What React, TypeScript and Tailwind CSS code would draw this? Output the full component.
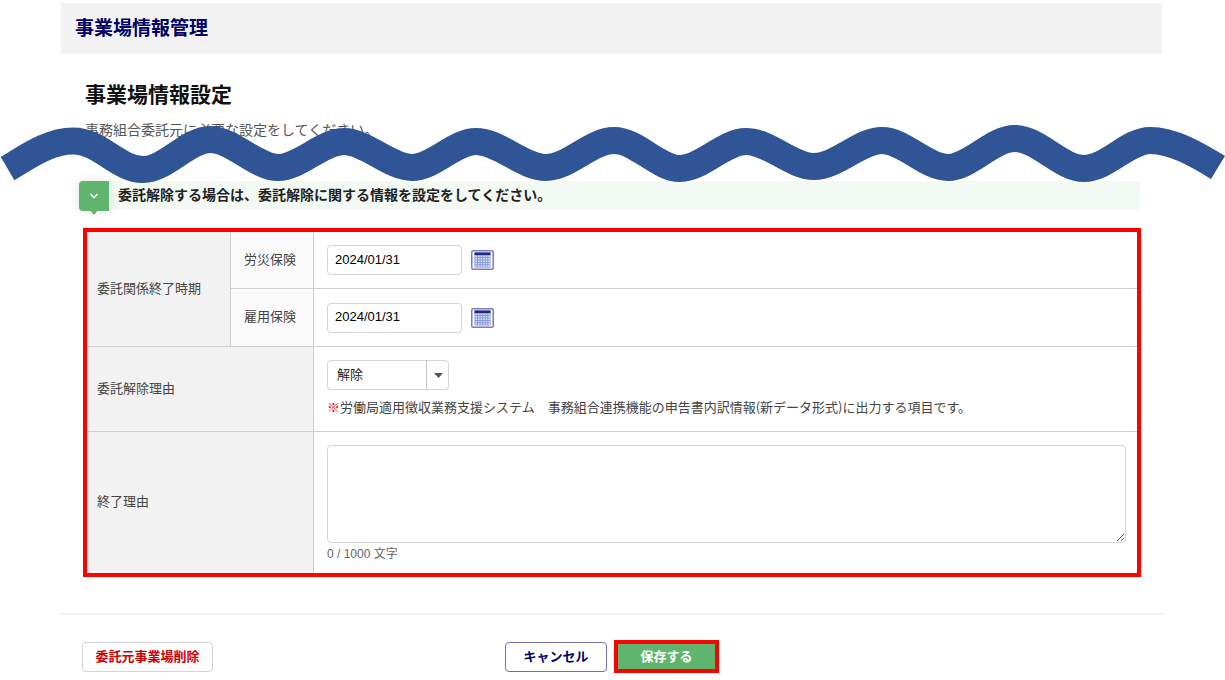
import { useState } from 'react'
import type { ReactNode } from 'react'

const gridX = [4.3, 6.9, 9.5, 12.1, 14.7, 17.3]
const gridY = [5.6, 8, 10.4, 12.8, 15.2]

function CalendarIcon() {
  return (
    <svg width="23" height="20" viewBox="0 0 23 20" aria-hidden="true">
      <rect x="0.75" y="0.75" width="21.5" height="18.5" rx="1.5" fill="#fff" stroke="#7a7dbb" strokeWidth="1.5" />
      <rect x="3.5" y="2.5" width="16" height="15" fill="#7f8ed6" />
      <rect x="3.5" y="2.5" width="16" height="2.5" fill="#22277f" />
      {gridY.map((y) =>
        gridX.map((x) => <rect key={`${x}-${y}`} x={x} y={y} width="1.7" height="1.6" fill="#d8e2fb" />),
      )}
    </svg>
  )
}

function Wave() {
  return (
    <svg
      className="absolute left-0 top-[120px] w-full h-[70px] pointer-events-none"
      viewBox="0 120 1225 70"
      preserveAspectRatio="none"
      aria-hidden="true"
    >
      <path
        d="M7.5 168.5 C27 157 49 141 73 141 C100 141 118 169.5 143 169.5 C166 169.5 188 139.5 210 139.5 C233 139.5 256 167.5 278 167.5 C300 167.5 322 141.5 344 141.5 C366 141.5 390 167.5 412 167.5 C434 167.5 454 141.5 476 141.5 C499 141.5 523 167.5 546 167.5 C569 167.5 591 140.5 614 140.5 C637 140.5 658 168.5 680 168.5 C702 168.5 724 141.5 746 141.5 C769 141.5 792 166.5 814 166.5 C837 166.5 860 140.5 882 140.5 C904 140.5 926 167.5 948 167.5 C970 167.5 992 138.5 1015 138.5 C1038 138.5 1061 168.5 1084 168.5 C1107 168.5 1128 140.5 1150 140.5 C1174 140.5 1199 156 1218 167.5"
        fill="none"
        stroke="#2f5597"
        strokeWidth="27"
      />
    </svg>
  )
}

function HeadCell({ children, sub, rowSpan, colSpan, last }: {
  children: ReactNode
  sub?: boolean
  rowSpan?: number
  colSpan?: number
  last?: boolean
}) {
  return (
    <th
      scope="row"
      rowSpan={rowSpan}
      colSpan={colSpan}
      className={`border-r border-[#cfcfcf] pb-[3px] text-left font-normal ${last ? '' : 'border-b'} ${
        sub ? 'bg-[#fafafa] px-[13px]' : 'bg-[#f2f2f2] px-[10px]'
      }`}
    >
      {children}
    </th>
  )
}

function DateField({ id, label }: { id: string; label: string }) {
  const [value, setValue] = useState('2024/01/31')
  return (
    <div className="flex items-center gap-[9px]">
      <input
        id={id}
        type="text"
        value={value}
        onChange={(e) => setValue(e.target.value)}
        className="w-[135px] h-[30px] rounded border border-[#d5d5d5] bg-white px-[7px] pb-[2px] font-['Liberation_Sans',sans-serif] text-[13px] text-black"
      />
      <button type="button" aria-label={`${label} カレンダー`}>
        <CalendarIcon />
      </button>
    </div>
  )
}

export default function App() {
  const [reason, setReason] = useState('')

  return (
    <main className="relative bg-white pt-[3px] pb-2 text-[13px] text-[#444] font-['Noto_Sans_CJK_JP',sans-serif]">
      <header className="ml-[61px] mr-[63px] flex h-[51px] items-center bg-[#f2f2f2] px-[14px] pb-1">
        <h1 className="text-[19px] leading-6 font-bold text-[#000066]">事業場情報管理</h1>
      </header>

      <section className="ml-[79px] mr-[84px] pt-6">
        <h2 className="pl-[6px] text-[21px] leading-[30px] font-bold text-[#111]">事業場情報設定</h2>
        <p className="mt-[11px] pl-[6px] text-sm leading-5 text-[#555]">
          事務組合委託元に必要な設定をしてください。
        </p>

        <div className="mt-[42px] mr-[1px] flex h-[29px] items-start rounded bg-[#f3faf4]">
          <button
            type="button"
            aria-label="開閉"
            className="relative flex h-[30px] w-[30px] items-center justify-center rounded-l bg-[#5fb56d] shadow-[0_0_10px_rgba(0,0,0,0.12)]"
          >
            <svg width="10" height="8" viewBox="0 0 10 8" fill="none" stroke="#fff" strokeWidth="1.6" aria-hidden="true">
              <path d="M1.5 2 L5 5.5 L8.5 2" />
            </svg>
            <svg className="absolute top-[29px] left-[11px]" width="8" height="5" viewBox="0 0 8 5" aria-hidden="true">
              <path d="M0 0 H8 L4 5 Z" fill="#5fb56d" />
            </svg>
          </button>
          <p className="mt-[3px] ml-[9px] text-sm leading-5 font-bold text-[#222]">
            委託解除する場合は、委託解除に関する情報を設定をしてください。
          </p>
        </div>

        <div className="mt-[18px] ml-1 border-4 border-[#ff0000]">
          <table className="w-full table-fixed border-separate border-spacing-0">
            <colgroup>
              <col className="w-[144px]" />
              <col className="w-[83px]" />
              <col />
            </colgroup>
            <tbody>
              <tr>
                <HeadCell rowSpan={2}>委託関係終了時期</HeadCell>
                <HeadCell sub>
                  <label htmlFor="rosai">労災保険</label>
                </HeadCell>
                <td className="h-[57px] border-b border-[#cfcfcf] px-[13px]">
                  <DateField id="rosai" label="労災保険" />
                </td>
              </tr>
              <tr>
                <HeadCell sub>
                  <label htmlFor="koyo">雇用保険</label>
                </HeadCell>
                <td className="h-[58px] border-b border-[#cfcfcf] px-[13px]">
                  <DateField id="koyo" label="雇用保険" />
                </td>
              </tr>
              <tr>
                <HeadCell colSpan={2}>
                  <label htmlFor="cancel-reason">委託解除理由</label>
                </HeadCell>
                <td className="border-b border-[#cfcfcf] px-[13px] pt-[13px] pb-[14px]">
                  <div className="relative w-[122px]">
                    <select
                      id="cancel-reason"
                      className="block h-[30px] w-full appearance-none rounded border border-[#d5d5d5] bg-white pb-[2px] pl-[9px] pr-6 text-[13px] text-[#222]"
                    >
                      <option>解除</option>
                    </select>
                    <span className="pointer-events-none absolute inset-y-0 right-0 flex w-[23px] items-center justify-center border-l border-[#c4c4c4]">
                      <svg width="9" height="5" viewBox="0 0 9 5" aria-hidden="true">
                        <path d="M0 0 H9 L4.5 5 Z" fill="#555" />
                      </svg>
                    </span>
                  </div>
                  <p className="mt-[7px] leading-5">
                    <span className="font-bold text-[#ff0000]">※</span>
                    労働局適用徴収業務支援システム　事務組合連携機能の申告書内訳情報(新データ形式)に出力する項目です。
                  </p>
                </td>
              </tr>
              <tr>
                <HeadCell colSpan={2} last>
                  <label htmlFor="end-reason">終了理由</label>
                </HeadCell>
                <td className="pt-[13px] pr-[11px] pb-[9px] pl-[13px]">
                  <textarea
                    id="end-reason"
                    maxLength={1000}
                    value={reason}
                    onChange={(e) => setReason(e.target.value)}
                    className="block h-[98px] w-full resize rounded border border-[#d5d5d5] bg-white p-2"
                  />
                  <p className="mt-[1px] font-['Liberation_Sans','Noto_Sans_CJK_JP',sans-serif] text-xs leading-5 text-[#666]">
                    {reason.length} / 1000 文字
                  </p>
                </td>
              </tr>
            </tbody>
          </table>
        </div>
      </section>

      <footer className="mt-9 ml-[59px] mr-[60px] grid grid-cols-3 items-center border-t-2 border-[#f2f2f2] px-[23px] pt-[25px] text-[13px] font-bold">
        <button
          type="button"
          className="h-[30px] w-[131px] justify-self-start rounded border border-[#d5d5d5] bg-white pb-[2px] text-[#cc0000]"
        >
          委託元事業場削除
        </button>
        <div className="flex items-center gap-[7px] justify-self-center">
          <button type="button" className="h-[30px] w-[102px] rounded border border-[#6f6fae] bg-white pb-[2px] text-[#000066]">
            キャンセル
          </button>
          <button type="button" className="h-[33px] w-[105px] border-4 border-[#ff0000] bg-[#5fb56d] pb-[2px] text-white">
            保存する
          </button>
        </div>
      </footer>

      <Wave />
    </main>
  )
}
